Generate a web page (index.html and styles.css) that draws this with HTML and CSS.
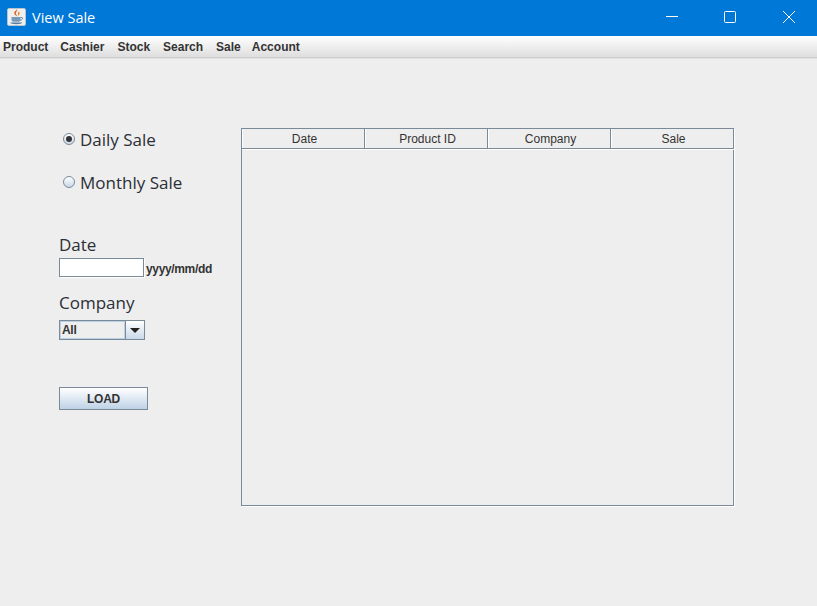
FILE: index.html
```html
<!DOCTYPE html>
<html lang="en">
  <head>
    <meta charset="UTF-8" />
    <title>View Sale</title>
    <link rel="stylesheet" href="styles.css">
  </head>
  <body>
    <div class="titleBar">
      <div class="appIcon">
        <svg width="17" height="16" viewBox="0 0 17 16">
          <path d="M9 0c1.200 1.800-1.800 3-1 5 .4.900 1.200 1.500 1.100 2.300C8 6.600 6 5.500 6.200 3.700 6.400 2 9 1.500 9 0z" fill="#e0651a" />
          <path d="M11.200 2.500c-1 .7-1.900 1.500-1.300 3 .3.600.4 1 .2 1.600 1.200-.9 2.200-3 1.100-4.600z" fill="#ef8a2c" />
          <path d="M3.500 8h9v2.500c0 1.400-1.100 2.300-2.500 2.300H6c-1.400 0-2.500-.9-2.500-2.300z" fill="#7b9ab8" />
          <path d="M12.500 8.500h1.300c1.300 0 1.200 2.300-1.700 2.800" fill="none" stroke="#5f82a3" />
          <path d="M2 13.500h12.500c-.8 1.300-2.500 1.700-6.200 1.700S2.800 14.800 2 13.500z" fill="#5b7c9d" />
        </svg>
      </div>
      <span class="titleText">View Sale</span>
      <div class="windowButtons">
        <div class="windowButton">
          <svg width="12" height="12" viewBox="0 0 12 12"><path d="M0 5.500h12" stroke="#fff" fill="none" /></svg>
        </div>
        <div class="windowButton">
          <svg width="12" height="12" viewBox="0 0 12 12"><rect x=".5" y=".5" width="11" height="11" rx="1" stroke="#fff" fill="none" /></svg>
        </div>
        <div class="windowButton">
          <svg width="12" height="12" viewBox="0 0 12 12"><path d="M0 0l12 12M12 0L0 12" stroke="#fff" fill="none" /></svg>
        </div>
      </div>
    </div>

    <div class="menuBar">
      <span class="menuItem">Product</span>
      <span class="menuItem">Cashier</span>
      <span class="menuItem stockItem">Stock</span>
      <span class="menuItem">Search</span>
      <span class="menuItem saleItem">Sale</span>
      <span class="menuItem">Account</span>
    </div>

    <div class="content">
      <div class="sidePanel">
        <div class="radioRow">
          <span class="radio checked"></span>
          <span class="bigLabel">Daily Sale</span>
        </div>
        <div class="radioRow">
          <span class="radio"></span>
          <span class="bigLabel">Monthly Sale</span>
        </div>

        <div class="fieldLabel dateLabel bigLabel">Date</div>
        <div class="dateRow">
          <div class="textField"></div>
          <span class="hint">yyyy/mm/dd</span>
        </div>

        <div class="fieldLabel companyLabel bigLabel">Company</div>
        <div class="combo">
          <span class="comboValue">All</span>
          <span class="comboArrow"></span>
        </div>

        <button class="loadButton">LOAD</button>
      </div>

      <div class="tablePanel">
        <div class="tableHeader">
          <div class="headerCell">Date</div>
          <div class="headerCell">Product ID</div>
          <div class="headerCell">Company</div>
          <div class="headerCell">Sale</div>
        </div>
      </div>
    </div>
  </body>
</html>
```

FILE: styles.css
```css
html,
body {
  height: 100%;
}
body {
  margin: 0;
  padding: 0;
  overflow: hidden;
  background-color: #eeeeee;
  font-family: "Liberation Sans", sans-serif;
  color: #333333;
}

.titleBar {
  display: flex;
  align-items: center;
  box-sizing: border-box;
  height: 36px;
  padding-bottom: 2px;
  background-color: #0078d7;
  color: white;
}
.appIcon {
  display: flex;
  align-items: center;
  justify-content: center;
  width: 19px;
  height: 18px;
  margin-left: 7px;
  border-radius: 2px;
  border: 1px solid #b9c4cc;
  box-sizing: border-box;
  background-color: #eef0f1;
}
.titleText {
  margin-left: 6px;
  font-family: "Open Sans", sans-serif;
  font-size: 14.5px;
}
.windowButtons {
  display: flex;
  margin-left: auto;
  height: 100%;
}
.windowButton {
  display: flex;
  align-items: center;
  justify-content: center;
  width: 58px;
}
.windowButton:last-child {
  width: 56px;
  margin-left: 2px;
}

.menuBar {
  display: flex;
  align-items: center;
  gap: 12px;
  height: 21px;
  padding-left: 3px;
  background: linear-gradient(#ffffff, #dedede);
  border-bottom: 1px solid #cccccc;
  box-shadow: 0 1px 0 #e2e2e2;
  font-size: 12px;
  font-weight: bold;
}
.stockItem {
  margin-left: 1px;
  margin-right: 1px;
}
.saleItem {
  margin-left: 1px;
  margin-right: -1px;
}

.content {
  display: flex;
  padding: 70px 0 0 59px;
}
.sidePanel {
  width: 182px;
}
.bigLabel {
  font-family: "Open Sans", sans-serif;
  font-size: 17px;
  line-height: 22px;
  color: #2b2f36;
}
.radioRow {
  display: flex;
  align-items: center;
  gap: 5px;
  height: 22px;
  margin-bottom: 21px;
  padding-left: 4px;
}
.radioRow .bigLabel {
  padding-top: 1px;
}
.radio {
  width: 10px;
  height: 10px;
  border: 1px solid #7a8a99;
  border-radius: 50%;
  background: linear-gradient(#ffffff, #c9d8e8);
  position: relative;
}
.radio.checked::after {
  content: "";
  position: absolute;
  top: 2px;
  left: 2px;
  width: 6px;
  height: 6px;
  border-radius: 50%;
  background-color: #333333;
}

.dateLabel {
  margin-top: 41px;
}
.dateRow {
  display: flex;
  align-items: center;
  gap: 2px;
  margin-top: 2px;
}
.textField {
  width: 83px;
  height: 17px;
  background-color: white;
  border: 1px solid #7a8a99;
  box-shadow: 1px 1px 0 white;
}
.hint {
  padding-top: 2px;
  font-size: 12px;
  font-weight: bold;
  letter-spacing: -0.35px;
}
.companyLabel {
  margin-top: 15px;
}
.combo {
  display: flex;
  width: 84px;
  height: 18px;
  margin-top: 6px;
  border: 1px solid #7a8a99;
  background-color: #eeeeee;
}
.comboValue {
  flex: 1;
  padding-left: 1px;
  border: 1px solid #b8cfe5;
  font-size: 12px;
  font-weight: bold;
  line-height: 16px;
  letter-spacing: -0.3px;
}
.comboArrow {
  display: flex;
  align-items: center;
  justify-content: center;
  width: 18px;
  border-left: 1px solid #7a8a99;
  background: linear-gradient(#ffffff, #c9d8e8);
}
.comboArrow::after {
  content: "";
  border-top: 5px solid #222222;
  border-left: 5px solid transparent;
  border-right: 5px solid transparent;
}
.loadButton {
  display: block;
  width: 89px;
  height: 23px;
  margin-top: 47px;
  padding: 0;
  border: 1px solid #7a8a99;
  background: linear-gradient(#ffffff, #bfd2e6);
  font-family: "Liberation Sans", sans-serif;
  font-size: 12px;
  font-weight: bold;
  letter-spacing: -0.2px;
  color: #333333;
}

.tablePanel {
  width: 491px;
  height: 376px;
  border: 1px solid #7a8a99;
  box-shadow: 1px 1px 0 white;
}
.tableHeader {
  display: grid;
  grid-template-columns: repeat(4, 123px);
  height: 20px;
}
.headerCell {
  display: flex;
  align-items: center;
  justify-content: center;
  box-sizing: border-box;
  padding-left: 3px;
  border-right: 1px solid #7a8a99;
  border-bottom: 1px solid #7a8a99;
  box-shadow: inset 1px 0 0 white, 0 1px 0 white;
  font-size: 12px;
}
```
